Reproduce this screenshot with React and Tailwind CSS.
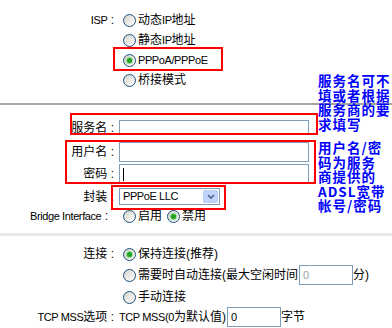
import React from "react";

function E({ children }) {
  return <span className="text-[11px] tracking-[-0.4px]">{children}</span>;
}

function Radio({ checked }) {
  return (
    <span className="w-[13px] h-[13px] shrink-0 rounded-full border border-[#1c5180] bg-linear-to-br from-[#d6d3ca] to-white flex items-center justify-center">
      {checked && <span className="w-[5px] h-[5px] rounded-full bg-[#21a121] shadow-[0_0_1px_1px_#8fd68f]" />}
    </span>
  );
}

function Option({ checked, children }) {
  return (
    <span className="flex items-center gap-[2px]">
      <Radio checked={checked} />
      <span className="whitespace-nowrap">{children}</span>
    </span>
  );
}

function Row({ label, className = "h-[20px]", labelClass = "", children }) {
  return (
    <div className={`flex items-center ${className}`}>
      <div className={`w-[114px] shrink-0 text-right whitespace-nowrap ${labelClass}`}>{label}</div>
      <div className="ml-[5px] flex items-center">{children}</div>
    </div>
  );
}

function TextBox({ className, children }) {
  return (
    <div className={`border border-[#7f9db9] bg-white flex items-center px-[3px] ${className}`}>
      {children}
    </div>
  );
}

export default function App() {
  return (
    <div className="relative w-[392px] h-[328px] overflow-hidden bg-white text-black text-[12px] leading-none font-['Liberation_Sans','Noto_Sans_CJK_SC',sans-serif]">
      <div className="pt-[10px]">
        <Row label={<><E>ISP</E> :</>}>
          <span className="ml-[4px]"><Option>动态<E>IP</E>地址</Option></span>
        </Row>
        <Row label="">
          <span className="ml-[4px]"><Option>静态<E>IP</E>地址</Option></span>
        </Row>
        <Row label="">
          <span className="ml-[4px]"><Option checked><E>PPPoA/PPPoE</E></Option></span>
        </Row>
        <Row label="">
          <span className="ml-[4px]"><Option>桥接模式</Option></span>
        </Row>

        <div className="mt-[13px] h-[2px] bg-[#a9a79d]" />

        <Row label="服务名 :" className="mt-[15px] h-[15px]">
          <TextBox className="w-[190px] h-[15px]" />
        </Row>
        <Row label="用户名 :" className="mt-[7px] h-[20px]">
          <TextBox className="w-[190px] h-[20px]" />
        </Row>
        <Row label="密码 :" className="mt-[2px] h-[20px]">
          <TextBox className="w-[190px] h-[20px]">
            <span className="w-[1px] h-[13px] bg-black" />
          </TextBox>
        </Row>
        <Row label="封装 :" className="mt-[4px] h-[17px]">
          <div className="w-[101px] h-[17px] border border-[#7f9db9] flex items-center justify-between pl-[3px] pr-[1px]">
            <E>PPPoE LLC</E>
            <span className="w-[15px] h-[13px] rounded-[2px] bg-[#c1d3fb] border border-[#b9cdf6] flex items-center justify-center">
              <svg width="8" height="5" viewBox="0 0 8 5">
                <path d="M1 1 L4 4 L7 1" fill="none" stroke="#4d6185" strokeWidth="1.6" />
              </svg>
            </span>
          </div>
        </Row>
        <Row label={<><E>Bridge Interface</E> :</>} labelClass="pr-[6px]" className="mt-[1px] h-[20px]">
          <span className="ml-[4px] flex items-center gap-[5px]">
            <Option>启用</Option>
            <Option checked>禁用</Option>
          </span>
        </Row>

        <div className="mt-[7px] h-[3px] bg-[#e8e8e8]" />

        <Row label="连接 :" className="mt-[8px] h-[20px]">
          <span className="ml-[4px]"><Option checked>保持连接(推荐)</Option></span>
        </Row>
        <Row label="" className="mt-[1px] h-[20px]">
          <span className="ml-[4px] flex items-center">
            <Option>需要时自动连接(最大空闲时间</Option>
            <TextBox className="ml-[1px] w-[54px] h-[20px] text-[#a0a0a0]"><E>0</E></TextBox>
            <span>分)</span>
          </span>
        </Row>
        <Row label="" className="mt-[2px] h-[20px]">
          <span className="ml-[4px]"><Option>手动连接</Option></span>
        </Row>
        <Row label={<><E>TCP MSS</E>选项 :</>} className="h-[20px]">
          <span className="flex items-center">
            <span><E>TCP MSS(0</E>为默认值)</span>
            <TextBox className="ml-[1px] w-[54px] h-[20px]"><E>0</E></TextBox>
            <span>字节</span>
          </span>
        </Row>
      </div>

      {/* annotations */}
      <div className="absolute left-[113px] top-[47px] w-[110px] h-[24px] border-2 border-[#ff0000]" />
      <div className="absolute left-[70px] top-[113px] w-[248px] h-[22px] border-2 border-[#ff0000]" />
      <div className="absolute left-[65px] top-[140px] w-[251px] h-[44px] border-2 border-[#ff0000]" />
      <div className="absolute left-[111px] top-[185px] w-[115px] h-[25px] border-2 border-[#ff0000]" />

      <p className="absolute left-[318px] top-[73px] text-[#0000ff] font-bold text-[13.5px] leading-[14.5px] tracking-[1px] font-['Noto_Sans_CJK_SC',sans-serif] whitespace-nowrap">
        服务名可不<br />填或者根据<br />服务商的要<br />求填写
      </p>
      <p className="absolute left-[318px] top-[140px] text-[#0000ff] font-bold text-[13.5px] leading-[14.5px] tracking-[1px] font-['Noto_Sans_CJK_SC',sans-serif] whitespace-nowrap">
        用户名/密<br />码为服务<br />商提供的<br />ADSL宽带<br />帐号/密码
      </p>
    </div>
  );
}
